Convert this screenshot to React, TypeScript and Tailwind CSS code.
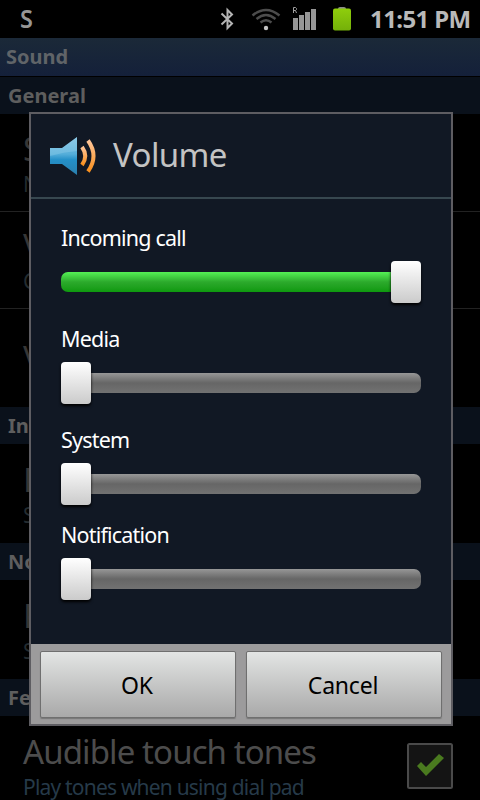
import React from 'react';

interface Volume {
  label: string;
  value: number;
  className: string;
}

interface Setting {
  title: string;
  summary?: string;
  className: string;
}

const volumes: Volume[] = [
  { label: 'Incoming call', value: 100, className: 'mt-[23px]' },
  { label: 'Media', value: 0, className: 'mt-[20px]' },
  { label: 'System', value: 0, className: 'mt-[20px]' },
  { label: 'Notification', value: 0, className: 'mt-[14px]' },
];

const StatusBar: React.FC = () => (
  <div className="flex h-[38px] shrink-0 items-center bg-black pr-[9px] pl-[20px] text-[#b9b9b9]">
    <span className="origin-left scale-x-90 pb-[2px] text-[26px] leading-[36px] font-semibold text-[#969696]">S</span>
    <svg className="ml-auto" width="14" height="24" viewBox="0 0 14 24" fill="none" stroke="#b4b4b4" strokeWidth="2">
      <path d="M1.500 6.500L12 16.500L7.500 21V3L12 7.500L1.500 17.500" />
    </svg>
    <svg className="ml-[17px]" width="30" height="24" viewBox="0 0 30 24" fill="none" stroke="#4c4c4c" strokeWidth="2.4">
      <path d="M1.500 8.500Q15 -2.500 28.500 8.500" />
      <path d="M5.500 12Q15 4 24.500 12" />
      <path d="M9.500 15.500Q15 11 20.500 15.500" />
      <circle cx="15" cy="21" r="2.200" fill="#c4c4c4" stroke="none" />
    </svg>
    <svg className="ml-[11px]" width="26" height="26" viewBox="0 0 26 26">
      <path d="M1.500 7V1.500H3.500L4.500 2.500V3.500L3.500 4.500H1.500M3.500 4.500L4.500 7" fill="none" stroke="#a0a0a0" />
      <g fill="#969696">
        <path d="M1 12H6V24H1Z" />
        <path d="M7 9H12V24H7Z" />
        <path d="M13 6H18V24H13Z" />
        <path d="M19 3H24V24H19Z" />
      </g>
    </svg>
    <svg className="ml-[14px]" width="20" height="26" viewBox="0 0 20 26">
      <defs>
        <linearGradient id="battery" x1="0" y1="0" x2="0" y2="1">
          <stop offset="0" stopColor="#8fce0c" />
          <stop offset="1" stopColor="#74b009" />
        </linearGradient>
      </defs>
      <path d="M6 3Q6 1 8 1H12Q14 1 14 3Z" fill="#8b8b8b" />
      <rect x="1" y="2.500" width="18" height="22" rx="2" fill="url(#battery)" />
    </svg>
    <span className="ml-[18px] w-[101px] text-[24px] leading-[38px] font-bold tracking-[-0.6px] whitespace-nowrap">
      11:51 PM
    </span>
  </div>
);

const SectionHeader: React.FC<{ title: string }> = ({ title }) => (
  <div className="h-[37px] shrink-0 bg-[#0a111b] pl-[8px] text-[20px] leading-[37px] font-bold text-[#5e5e5e]">
    {title}
  </div>
);

const SettingRow: React.FC<Setting> = ({ title, summary, className }) => (
  <div className={`flex shrink-0 flex-col justify-center pl-[23px] ${className}`}>
    <span className="text-[33px] leading-[42px] tracking-[-0.9px] text-[#363636]">{title}</span>
    {summary && <span className="text-[21px] leading-[28px] tracking-[-0.8px] text-[#242c30]">{summary}</span>}
  </div>
);

const SpeakerIcon: React.FC = () => (
  <svg width="48" height="42" viewBox="0 0 48 42">
    <defs>
      <linearGradient id="speaker" x1="0" y1="0" x2="0" y2="1">
        <stop offset="0" stopColor="#7fc0e2" />
        <stop offset="0.45" stopColor="#55aeda" />
        <stop offset="0.6" stopColor="#2490c8" />
        <stop offset="1" stopColor="#2a7fae" />
      </linearGradient>
      <linearGradient id="wave" x1="0" y1="0" x2="0" y2="1">
        <stop offset="0" stopColor="#ffc69a" />
        <stop offset="1" stopColor="#f98f1c" />
      </linearGradient>
    </defs>
    <path d="M1 13H13L28 2V40L13 29H1Z" fill="url(#speaker)" />
    <path d="M1 13H13L28 2V16Q15 17 1 21Z" fill="#b9e2f5" opacity="0.25" />
    <path d="M33 12Q39.500 21 33 30" fill="none" stroke="url(#wave)" strokeWidth="4" />
    <path d="M39 5.500Q50 21 39 36.500" fill="none" stroke="url(#wave)" strokeWidth="4" />
  </svg>
);

const VolumeSlider: React.FC<Volume> = ({ label, value, className }) => (
  <div className={className}>
    <div className="h-[32px] text-[21.5px] leading-[32px] tracking-[-0.8px] text-white">{label}</div>
    <div className="mt-[7px] grid h-[42px] items-center">
      <div
        className={`col-start-1 row-start-1 h-[20px] rounded-[7px] bg-linear-to-b ${
          value > 0 ? 'from-[#55f055] via-[#2caa2c] to-[#0d990d]' : 'from-[#979797] via-[#666666] to-[#727272]'
        }`}
      />
      <div
        className={`col-start-1 row-start-1 h-[42px] w-[30px] rounded-[4px] bg-linear-to-b from-white to-[#cbcbcb] shadow-[0_2px_3px_#000000] ${
          value > 0 ? 'justify-self-end' : 'justify-self-start'
        }`}
      />
    </div>
  </div>
);

const DialogButton: React.FC<{ children: React.ReactNode }> = ({ children }) => (
  <button className="h-[67px] w-[196px] rounded-[2px] border border-[#6f6f6f] bg-linear-to-b from-[#e3e5e4] to-[#a9a9a9] pt-[2px] pr-[2px] text-[23px] tracking-[-0.2px] text-black shadow-[0_1px_1px_#777777]">
    {children}
  </button>
);

const VolumeDialog: React.FC = () => (
  <div className="absolute top-[112px] left-[29px] flex h-[614px] w-[424px] flex-col border-2 border-[#5e5d62] bg-[#111824]">
    <div className="flex h-[85px] shrink-0 items-center border-b-2 border-[#37474f] pl-[18px]">
      <SpeakerIcon />
      <h1 className="ml-[16px] pb-[2px] text-[33px] leading-[42px] tracking-[-0.6px] text-[#c3c3c3]">Volume</h1>
    </div>
    <div className="flex flex-1 flex-col px-[30px]">
      {volumes.map((volume) => (
        <VolumeSlider key={volume.label} {...volume} />
      ))}
    </div>
    <div className="flex h-[80px] shrink-0 gap-[10px] bg-[#9c9b9c] pt-[7px] pl-[9px]">
      <DialogButton>OK</DialogButton>
      <DialogButton>Cancel</DialogButton>
    </div>
  </div>
);

const App: React.FC = () => {
  return (
    <div className="relative flex h-[800px] w-[480px] flex-col overflow-hidden bg-black font-['Noto_Sans','Open_Sans',sans-serif]">
      <StatusBar />
      <div className="h-[39px] shrink-0 border-b border-black bg-linear-to-b from-[#1b2938] to-[#14203a] pl-[6px] text-[20px] leading-[38px] font-bold text-[#606468]">
        Sound
      </div>
      <SectionHeader title="General" />
      {/* only the first letters show beside the dialog */}
      <SettingRow title="S" summary="N" className="h-[98px] border-b border-[#222222]" />
      <SettingRow title="V" summary="C" className="h-[97px] border-b border-[#222222]" />
      <SettingRow title="V" className="h-[98px]" />
      <SectionHeader title="In" />
      <SettingRow title="P" summary="S" className="h-[99px]" />
      <SectionHeader title="No" />
      <SettingRow title="R" summary="S" className="h-[99px]" />
      <SectionHeader title="Fe" />
      <div className="flex h-[99px] shrink-0 items-center justify-between pr-[27px]">
        <div className="flex flex-col pl-[23px]">
          <span className="text-[33px] leading-[42px] tracking-[-0.9px] text-[#4c4c4c]">Audible touch tones</span>
          <span className="text-[21px] leading-[28px] tracking-[-0.8px] text-[#263a49]">Play tones when using dial pad</span>
        </div>
        <svg width="46" height="46" viewBox="0 0 46 46">
          <rect x="1" y="1" width="44" height="44" rx="1.500" fill="#141414" stroke="#4a4a4a" strokeWidth="2" />
          <path d="M10 23L14 19L19 24L32 11L37 15L19 33Z" fill="#4a7a1f" />
        </svg>
      </div>
      <VolumeDialog />
    </div>
  );
};

export default App;
